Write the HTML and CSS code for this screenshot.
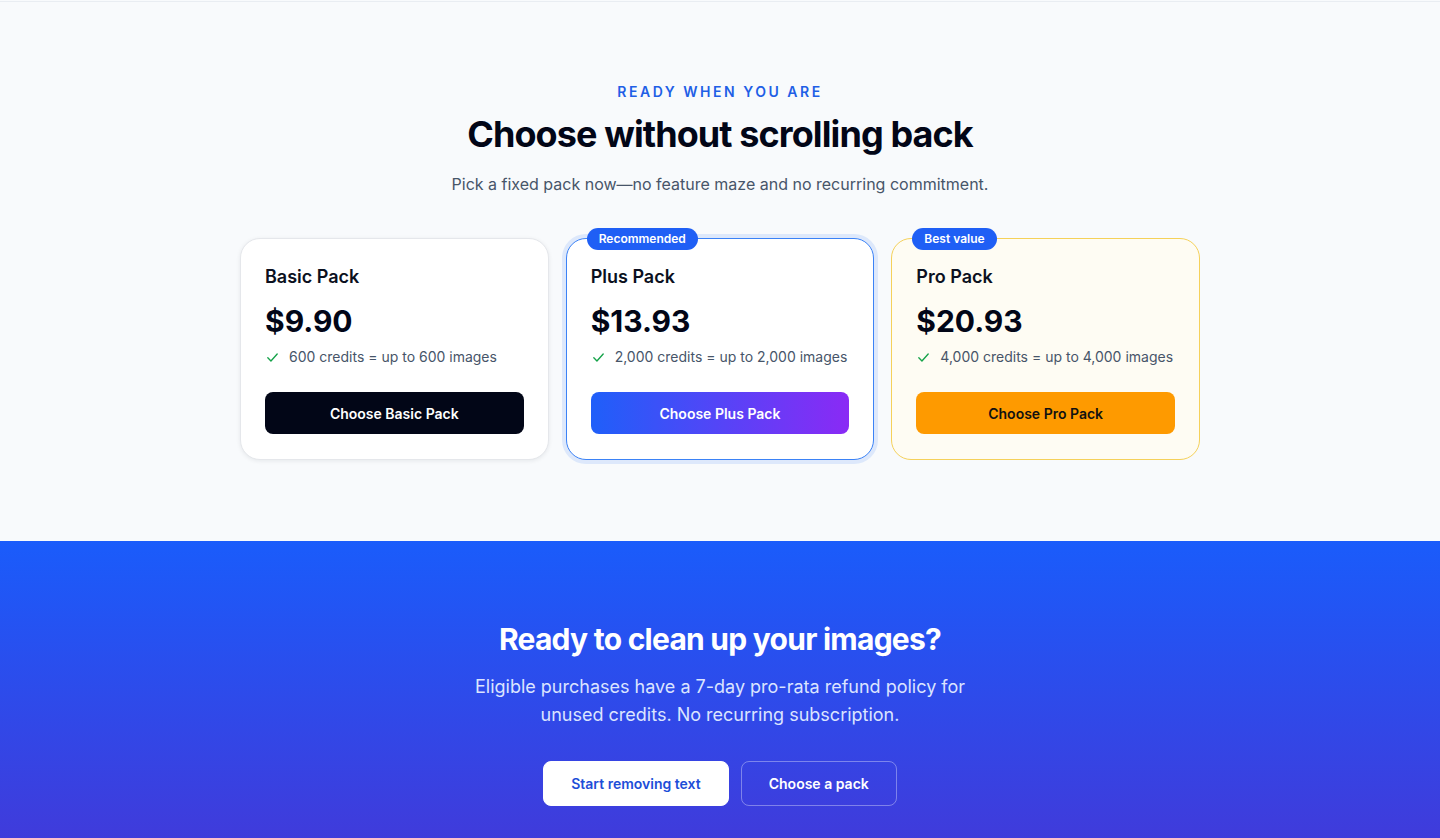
FILE: index.html
```html
<!DOCTYPE html>
<html lang="en">
<head>
<meta charset="utf-8">
<title>Pricing</title>
<link rel="stylesheet" href="styles.css">
</head>
<body>
<section class="pricing">
  <p class="eyebrow">READY WHEN YOU ARE</p>
  <h2 class="title">Choose without scrolling back</h2>
  <p class="subtitle">Pick a fixed pack now—no feature maze and no recurring commitment.</p>
  <div class="cards">
    <div class="card">
      <h3 class="card-name">Basic Pack</h3>
      <div class="price">$9.90</div>
      <ul class="features">
        <li><svg class="check" viewBox="0 0 24 24" fill="none" stroke="currentColor" stroke-width="2.2" stroke-linecap="round" stroke-linejoin="round"><path d="M4.5 12.5l5 5 10-11"/></svg>600 credits = up to 600 images</li>
      </ul>
      <button class="btn btn-dark">Choose Basic Pack</button>
    </div>
    <div class="card card-plus">
      <span class="badge">Recommended</span>
      <h3 class="card-name">Plus Pack</h3>
      <div class="price">$13.93</div>
      <ul class="features">
        <li><svg class="check" viewBox="0 0 24 24" fill="none" stroke="currentColor" stroke-width="2.2" stroke-linecap="round" stroke-linejoin="round"><path d="M4.5 12.5l5 5 10-11"/></svg>2,000 credits = up to 2,000 images</li>
      </ul>
      <button class="btn btn-gradient">Choose Plus Pack</button>
    </div>
    <div class="card card-pro">
      <span class="badge">Best value</span>
      <h3 class="card-name">Pro Pack</h3>
      <div class="price">$20.93</div>
      <ul class="features">
        <li><svg class="check" viewBox="0 0 24 24" fill="none" stroke="currentColor" stroke-width="2.2" stroke-linecap="round" stroke-linejoin="round"><path d="M4.5 12.5l5 5 10-11"/></svg>4,000 credits = up to 4,000 images</li>
      </ul>
      <button class="btn btn-amber">Choose Pro Pack</button>
    </div>
  </div>
</section>
<section class="cta">
  <h2 class="cta-title">Ready to clean up your images?</h2>
  <p class="cta-text">Eligible purchases have a 7-day pro-rata refund policy for unused credits. No recurring subscription.</p>
  <div class="cta-actions">
    <button class="cta-btn cta-primary">Start removing text</button>
    <button class="cta-btn cta-secondary">Choose a pack</button>
  </div>
</section>
</body>
</html>
```
FILE: styles.css
```css
* { box-sizing: border-box; }
html, body { margin: 0; padding: 0; }
body {
  font-family: Inter, "Noto Sans", sans-serif;
  background: #f8fafc;
  color: #020617;
  -webkit-font-smoothing: antialiased;
}
.pricing {
  border-top: 1px solid #e9edf2;
  margin-top: 1px;
  padding: 80px 0 80px;
  text-align: center;
  height: 540px;
}
.eyebrow {
  margin: 0;
  font-size: 14px;
  line-height: 20px;
  font-weight: 600;
  letter-spacing: 0.18em;
  color: #1f5fe6;
}
.title {
  margin: 12px 0 0;
  font-size: 36px;
  line-height: 40px;
  font-weight: 700;
  letter-spacing: -0.9px;
  color: #020617;
}
.subtitle {
  margin: 18px 0 0;
  font-size: 16px;
  line-height: 24px;
  color: #475569;
}
.cards {
  width: 960px;
  margin: 42px auto 0;
  display: grid;
  grid-template-columns: repeat(3, 1fr);
  gap: 17px;
  text-align: left;
}
.card {
  position: relative;
  background: #fff;
  border: 1px solid #e5e7eb;
  border-radius: 20px;
  padding: 24px 24px 25px;
  box-shadow: 0 1px 4px rgba(15, 23, 42, 0.08);
}
.card-plus {
  border-color: #3b82f6;
  box-shadow: 0 0 0 4px rgba(59, 130, 246, 0.14);
}
.card-pro {
  border-color: #f5d15a;
  background: #fefcf3;
  box-shadow: none;
}
.badge {
  position: absolute;
  top: -11px;
  left: 20px;
  background: #1f5ff5;
  color: #fff;
  font-size: 12px;
  line-height: 22px;
  font-weight: 600;
  padding: 0 12px;
  border-radius: 999px;
}
.card-name {
  margin: 0;
  font-size: 18px;
  line-height: 28px;
  font-weight: 600;
  color: #0b1020;
}
.price {
  margin-top: 12px;
  font-size: 30px;
  line-height: 36px;
  font-weight: 700;
  color: #020617;
}
.features {
  list-style: none;
  margin: 8px 0 0;
  padding: 0;
}
.features li {
  display: flex;
  align-items: center;
  gap: 9px;
  font-size: 14px;
  line-height: 20px;
  color: #475569;
}
.check {
  width: 15px;
  height: 15px;
  color: #16a34a;
  flex: none;
}
.btn {
  display: block;
  width: 100%;
  margin-top: 25px;
  height: 42px;
  border: 0;
  border-radius: 8px;
  font-family: inherit;
  font-size: 14px;
  font-weight: 600;
  cursor: pointer;
}
.btn-dark { background: #020617; color: #fff; }
.btn-gradient { background: linear-gradient(90deg, #1f5ff9, #8a2af5); color: #fff; }
.btn-amber { background: #fe9a00; color: #111; }
.cta {
  background: linear-gradient(180deg, #1a5cfb 0%, #4338d8 100%);
  text-align: center;
  padding: 80px 0 60px;
  color: #fff;
  min-height: 298px;
}
.cta-title {
  margin: 0;
  font-size: 30px;
  line-height: 36px;
  font-weight: 700;
  letter-spacing: -0.75px;
}
.cta-text {
  margin: 16px auto 0;
  max-width: 512px;
  font-size: 18px;
  line-height: 28px;
  color: #dbe4ff;
}
.cta-actions {
  margin-top: 32px;
  display: flex;
  justify-content: center;
  gap: 12px;
}
.cta-btn {
  height: 45px;
  padding: 0 27px;
  border-radius: 8px;
  font-family: inherit;
  font-size: 14px;
  font-weight: 600;
  cursor: pointer;
}
.cta-primary { background: #fff; color: #1d4ed8; border: 1px solid #fff; }
.cta-secondary { background: transparent; color: #fff; border: 1px solid rgba(255, 255, 255, 0.35); }
```
